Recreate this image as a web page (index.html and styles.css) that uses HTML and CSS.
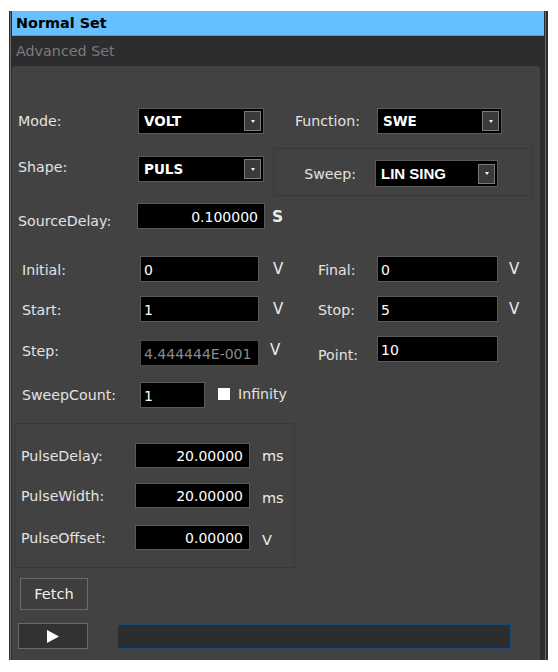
FILE: index.html
```html
<!DOCTYPE html>
<html>
<head>
<meta charset="utf-8">
<link rel="stylesheet" href="styles.css">
</head>
<body>
<div class="window">
  <div class="inner">
    <div class="tab tab-active">Normal Set</div>
    <div class="tab tab-idle">Advanced Set</div>
    <div class="panel">
      <div class="row r-mode">
        <span class="lbl c-lbl1">Mode:</span>
        <div class="select s-main"><span class="sv">VOLT</span><span class="dd"><i class="arrow"></i></span></div>
        <span class="lbl c-fn">Function:</span>
        <div class="select s-fn"><span class="sv">SWE</span><span class="dd"><i class="arrow"></i></span></div>
      </div>
      <div class="row r-shape">
        <div class="shape-col">
          <span class="lbl c-lbl1 shape-lbl">Shape:</span>
          <div class="select s-main"><span class="sv">PULS</span><span class="dd"><i class="arrow"></i></span></div>
        </div>
        <div class="group g-sweep">
          <span class="lbl c-sweep">Sweep:</span>
          <div class="select s-sweep"><span class="sv sv-narrow">LIN SING</span><span class="dd"><i class="arrow"></i></span></div>
        </div>
      </div>
      <div class="row r-delay">
        <span class="lbl c-delay">SourceDelay:</span>
        <div class="input in-delay num">0.100000</div>
        <span class="unit u-s">S</span>
      </div>
      <div class="sweep">
        <div class="row r-sw r-initial">
          <span class="lbl c-lbl2">Initial:</span>
          <div class="input in-w">0</div>
          <span class="unit u-v">V</span>
          <span class="lbl c-lbl3">Final:</span>
          <div class="input in-w2">0</div>
          <span class="unit u-v2">V</span>
        </div>
        <div class="row r-sw r-start">
          <span class="lbl c-lbl2">Start:</span>
          <div class="input in-w">1</div>
          <span class="unit u-v">V</span>
          <span class="lbl c-lbl3">Stop:</span>
          <div class="input in-w2">5</div>
          <span class="unit u-v2">V</span>
        </div>
        <div class="row r-sw r-step">
          <span class="lbl c-lbl2 low">Step:</span>
          <div class="input in-w disabled low-in">4.444444E-001</div>
          <span class="unit u-v u-step low">V</span>
          <span class="lbl c-lbl3 low">Point:</span>
          <div class="input in-w2">10</div>
        </div>
        <div class="row r-sw r-count">
          <span class="lbl c-lbl2 up">SweepCount:</span>
          <div class="input in-count">1</div>
          <span class="check"></span>
          <span class="lbl chk-lbl">Infinity</span>
        </div>
      </div>
      <div class="group g-pulse">
        <div class="row r-pulse p1">
          <span class="lbl c-pl">PulseDelay:</span>
          <div class="input in-pulse num">20.00000</div>
          <span class="unit u-ms">ms</span>
        </div>
        <div class="row r-pulse p2">
          <span class="lbl c-pl">PulseWidth:</span>
          <div class="input in-pulse num">20.00000</div>
          <span class="unit u-ms down">ms</span>
        </div>
        <div class="row r-pulse p3">
          <span class="lbl c-pl">PulseOffset:</span>
          <div class="input in-pulse num">0.00000</div>
          <span class="unit u-ms down">V</span>
        </div>
      </div>
      <button class="btn fetch">Fetch</button>
      <div class="row r-run">
        <button class="btn play"><svg width="12" height="13" viewBox="0 0 12 13"><polygon points="0,0 12,6.5 0,13" fill="#ffffff"/></svg></button>
        <div class="progress"></div>
      </div>
    </div>
  </div>
</div>
</body>
</html>
```

FILE: styles.css
```css
html, body {
  margin: 0;
  padding: 0;
  background: #ffffff;
}
body {
  font-family: "DejaVu Sans", "Liberation Sans", sans-serif;
  font-size: 14.2px;
}
.window {
  margin: 11px 0 0 9px;
  width: 539px;
  height: 649px;
  box-sizing: border-box;
  background: #2d2d30;
  padding: 0 2px 0 1px;
}
.inner {
  height: 100%;
  box-sizing: border-box;
  border-left: 1px solid #6b6b6b;
  border-right: 1px solid #6b6b6b;
  padding: 0 1px;
  display: flex;
  flex-direction: column;
}
.tab {
  box-sizing: border-box;
  padding-left: 4px;
  display: flex;
  align-items: center;
}
.tab-active {
  height: 25px;
  background: #66bfff;
  border-bottom: 1px solid #4f9fd9;
  color: #000000;
  font-weight: bold;
  font-size: 14.4px;
  padding-bottom: 1px;
}
.tab-idle {
  height: 30px;
  color: #7a7a7a;
  font-size: 14.3px;
  padding-bottom: 1px;
}
.panel {
  flex: 1;
  margin-right: 4px;
  background: #424242;
  border-radius: 4px 4px 0 0;
  color: #e2e2e2;
}
.row {
  display: flex;
  align-items: center;
}
.lbl {
  box-sizing: border-box;
  white-space: nowrap;
}
.select, .input {
  box-sizing: border-box;
  background: #000000;
  border: 1px solid #5a5a5a;
  color: #ffffff;
}
.select {
  height: 26px;
  display: flex;
  align-items: center;
  justify-content: space-between;
  padding: 0 2px 0 5px;
}
.sv {
  font-weight: bold;
  font-size: 13.5px;
}
.sv-narrow {
  font-family: "Liberation Sans", sans-serif;
  font-size: 15px;
}
.dd {
  width: 17px;
  height: 20px;
  box-sizing: border-box;
  background: #3a3a3a;
  border: 1px solid #7a7a7a;
  display: flex;
  align-items: center;
  justify-content: center;
}
.arrow {
  width: 0;
  height: 0;
  border-left: 2.5px solid transparent;
  border-right: 2.5px solid transparent;
  border-top: 3px solid #ffffff;
}
.input {
  height: 26px;
  display: flex;
  align-items: center;
  padding: 1px 3px 0 3px;
  font-size: 14px;
}
.input.num {
  justify-content: flex-end;
  padding-right: 6px;
}
.disabled {
  color: #8a8a8a;
  border-color: #4d4d4d;
}
.unit {
  font-size: 15px;
  color: #ececec;
}

/* row 1 */
.r-mode {
  margin-top: 42px;
}
.c-lbl1 {
  width: 126px;
  padding-left: 6px;
}
.s-main {
  width: 126px;
}
.c-fn {
  width: 113px;
  text-align: right;
  padding-right: 17px;
}
.s-fn {
  width: 125px;
}

/* row 2 */
.r-shape {
  margin-top: 14px;
  align-items: flex-start;
}
.shape-col {
  display: flex;
  align-items: center;
  margin-top: 8px;
}
.shape-lbl {
  padding-bottom: 4px;
}
.group {
  box-sizing: border-box;
  border: 1px solid #393939;
}
.g-sweep {
  margin-left: 9px;
  width: 260px;
  height: 48px;
  display: flex;
  align-items: flex-start;
  padding-top: 11px;
}
.c-sweep {
  width: 101px;
  text-align: right;
  padding-right: 19px;
  line-height: 27px;
  padding-top: 1px;
}
.s-sweep {
  width: 123px;
  height: 27px;
}

/* row 3 */
.r-delay {
  margin-top: 7px;
}
.c-delay {
  width: 125px;
  padding-left: 6px;
  padding-top: 10px;
}
.in-delay {
  width: 128px;
}
.u-s {
  margin-left: 7px;
  font-weight: bold;
  font-size: 15.5px;
  padding-top: 1px;
}

/* sweep block */
.sweep {
  margin-top: 27px;
  display: flex;
  flex-direction: column;
}
.r-sw {
  height: 26px;
}
.r-start {
  margin-top: 14px;
}
.r-step {
  margin-top: 14px;
  align-items: flex-start;
}
.r-count {
  margin-top: 20px;
}
.c-lbl2 {
  width: 128px;
  padding-left: 10px;
  padding-top: 2px;
}
.c-lbl2.up {
  padding-top: 0;
}
.in-w {
  width: 119px;
}
.u-v {
  width: 59px;
  padding-left: 14px;
  box-sizing: border-box;
}
.c-lbl3 {
  width: 59px;
  padding-top: 2px;
}
.in-w2 {
  width: 121px;
}
.u-v2 {
  margin-left: 11px;
}
.low {
  margin-top: 7px;
}
.low-in {
  margin-top: 4px;
}
.u-step {
  padding-left: 11px;
  margin-top: 5px;
}
.r-step .c-lbl2.low {
  margin-top: 5px;
}
.r-step .c-lbl3.low {
  margin-top: 9px;
}
.in-count {
  width: 65px;
}
.check {
  width: 12px;
  height: 12px;
  background: #ffffff;
  margin-left: 13px;
  margin-bottom: 2px;
}
.chk-lbl {
  margin-left: 8px;
  padding-bottom: 3px;
}

/* pulse group */
.g-pulse {
  margin: 15px 0 0 3px;
  width: 280px;
  height: 145px;
  padding-top: 19px;
  display: flex;
  flex-direction: column;
}
.r-pulse {
  height: 25px;
}
.p2 {
  margin-top: 15px;
}
.p3 {
  margin-top: 17px;
}
.c-pl {
  width: 119px;
  padding-left: 5px;
}
.in-pulse {
  width: 115px;
  height: 25px;
}
.u-ms {
  margin-left: 12px;
  font-size: 14.5px;
}
.u-ms.down {
  padding-top: 5px;
}

/* buttons */
.btn {
  box-sizing: border-box;
  font-family: "DejaVu Sans", "Liberation Sans", sans-serif;
  color: #f0f0f0;
  border: 1px solid #6a6a6a;
  padding: 0;
  margin: 0;
  display: flex;
  align-items: center;
  justify-content: center;
}
.fetch {
  margin: 10px 0 0 8px;
  width: 68px;
  height: 32px;
  background: #3e3e3e;
  font-size: 14.6px;
  padding-bottom: 2px;
}
.r-run {
  margin-top: 13px;
}
.play {
  margin-left: 6px;
  width: 70px;
  height: 26px;
  background: #323232;
}
.progress {
  margin-left: 29px;
  width: 394px;
  height: 25px;
  box-sizing: border-box;
  background: #2d2d30;
  border: 1px solid #1a4a72;
  margin-top: 1px;
}
```
